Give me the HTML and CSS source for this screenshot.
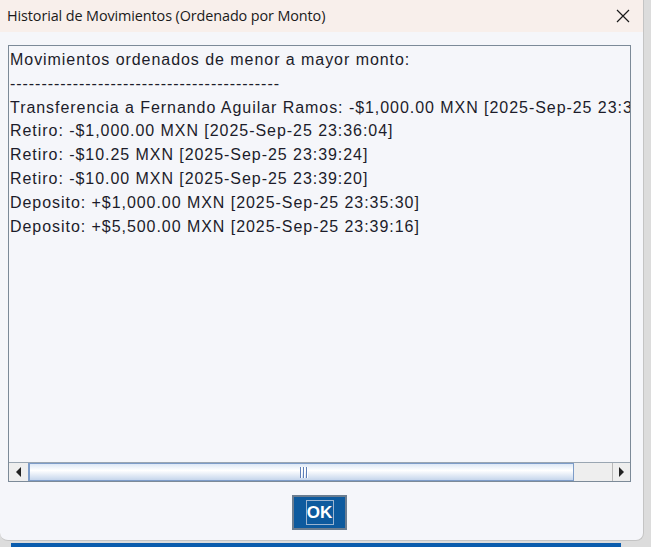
FILE: index.html
```html
<!DOCTYPE html>
<html>
<head>
<meta charset="utf-8">
<link rel="stylesheet" href="styles.css">
</head>
<body>
<div class="window">
  <div class="titlebar">
    <span class="title">Historial de Movimientos (Ordenado por Monto)</span>
    <svg class="close" width="14" height="14" viewBox="0 0 14 14"><path d="M1 1 L13 13 M13 1 L1 13" stroke="#1a1a1a" stroke-width="1.2" fill="none"/></svg>
  </div>
  <div class="content">
    <div class="scrollpane">
      <div class="viewport">
        <div class="text">
          <div class="line">Movimientos ordenados de menor a mayor monto:</div>
          <div class="line">-------------------------------------------</div>
          <div class="line">Transferencia a Fernando Aguilar Ramos: -$1,000.00 MXN [2025-Sep-25 23:35:48]</div>
          <div class="line">Retiro: -$1,000.00 MXN [2025-Sep-25 23:36:04]</div>
          <div class="line">Retiro: -$10.25 MXN [2025-Sep-25 23:39:24]</div>
          <div class="line">Retiro: -$10.00 MXN [2025-Sep-25 23:39:20]</div>
          <div class="line">Deposito: +$1,000.00 MXN [2025-Sep-25 23:35:30]</div>
          <div class="line">Deposito: +$5,500.00 MXN [2025-Sep-25 23:39:16]</div>
        </div>
      </div>
      <div class="hscroll">
        <div class="arrow left"><svg width="6" height="10" viewBox="0 0 6 10"><path d="M5 0 L0 5 L5 10 Z" fill="#222"/></svg></div>
        <div class="track">
          <div class="thumb"><div class="grip"><span></span><span></span><span></span></div></div>
          <div class="rest"></div>
        </div>
        <div class="arrow right"><svg width="6" height="10" viewBox="0 0 6 10"><path d="M0 0 L5 5 L0 10 Z" fill="#222"/></svg></div>
      </div>
    </div>
    <div class="buttons">
      <button class="ok"><span>OK</span></button>
    </div>
  </div>
</div>
<div class="taskbar"></div>
</body>
</html>
```

FILE: styles.css
```css
html, body {
  margin: 0;
  padding: 0;
  background: #dcdcdc;
  width: 651px;
  height: 547px;
  overflow: hidden;
  position: relative;
}
.window {
  width: 644px;
  height: 541px;
  background: #f5f6fa;
  border-right: 1px solid #c4c4c4;
  border-bottom: 1px solid #c4c4c4;
  border-radius: 0 0 8px 8px;
  box-sizing: border-box;
  display: flex;
  flex-direction: column;
  overflow: hidden;
  position: relative;
  z-index: 1;
}
.titlebar {
  height: 32px;
  flex: none;
  background: #f8efeb;
  display: flex;
  align-items: center;
  justify-content: space-between;
  padding: 0 13px 0 7px;
}
.title {
  font-family: "Open Sans", "Noto Sans", sans-serif;
  font-size: 14.4px;
  color: #1a1a1a;
  letter-spacing: -0.1px;
  margin-top: -1px;
}
.close { display: block; margin-top: -1px; }
.content {
  flex: 1;
  display: flex;
  flex-direction: column;
  padding: 13px 12px 0 8px;
}
.scrollpane {
  height: 435px;
  border: 1px solid #7c8a98;
  display: flex;
  flex-direction: column;
  background: #f5f6fa;
}
.viewport {
  flex: 1;
  overflow: hidden;
}
.text {
  padding: 2px 0 0 1px;
  font-family: "Liberation Sans", Arial, sans-serif;
  font-size: 16px;
  color: #1c1c2a;
  white-space: nowrap;
  letter-spacing: 0.95px;
}
.line {
  height: 23.8px;
  line-height: 23.8px;
}
.hscroll {
  height: 18px;
  flex: none;
  display: flex;
  border-top: 1px solid #9aa6b2;
}
.arrow {
  width: 19px;
  background: #eeeeee;
  display: flex;
  align-items: center;
  justify-content: center;
  flex: none;
}
.arrow.left { border-right: 1px solid #7d9cc8; }
.arrow.right { border-left: 1px solid #b8b8b8; width: 17px; }
.track {
  flex: 1;
  display: flex;
  background: #eeeeee;
}
.thumb {
  width: 545px;
  border: 1px solid #7d9cc8;
  box-sizing: border-box;
  background: linear-gradient(#dde8f6 0%, #ffffff 40%, #c6d6ec 100%);
  display: flex;
  align-items: center;
  justify-content: center;
}
.grip {
  display: flex;
  gap: 1px;
  height: 11px;
  margin-left: 4px;
}
.grip span {
  width: 1px;
  background: #5e7fb8;
  border-right: 1px solid #ffffff;
}
.rest { flex: 1; }
.buttons {
  display: flex;
  justify-content: center;
  padding-top: 13px;
}
.ok {
  width: 55px;
  height: 35px;
  background: #0d5a9e;
  border: 2px solid #6b7d90;
  padding: 3px 0 3px 0;
  margin: 0;
  display: flex;
  align-items: stretch;
  justify-content: center;
}
.ok span {
  width: 28px;
  border: 1px solid #9bb4d0;
  box-sizing: border-box;
  color: #ffffff;
  font-family: "Liberation Sans", Arial, sans-serif;
  font-weight: bold;
  font-size: 17px;
  display: flex;
  align-items: center;
  justify-content: center;
}
.taskbar {
  position: absolute;
  left: 11px;
  top: 543px;
  width: 610px;
  height: 4px;
  background: #0b5cad;
}
```
